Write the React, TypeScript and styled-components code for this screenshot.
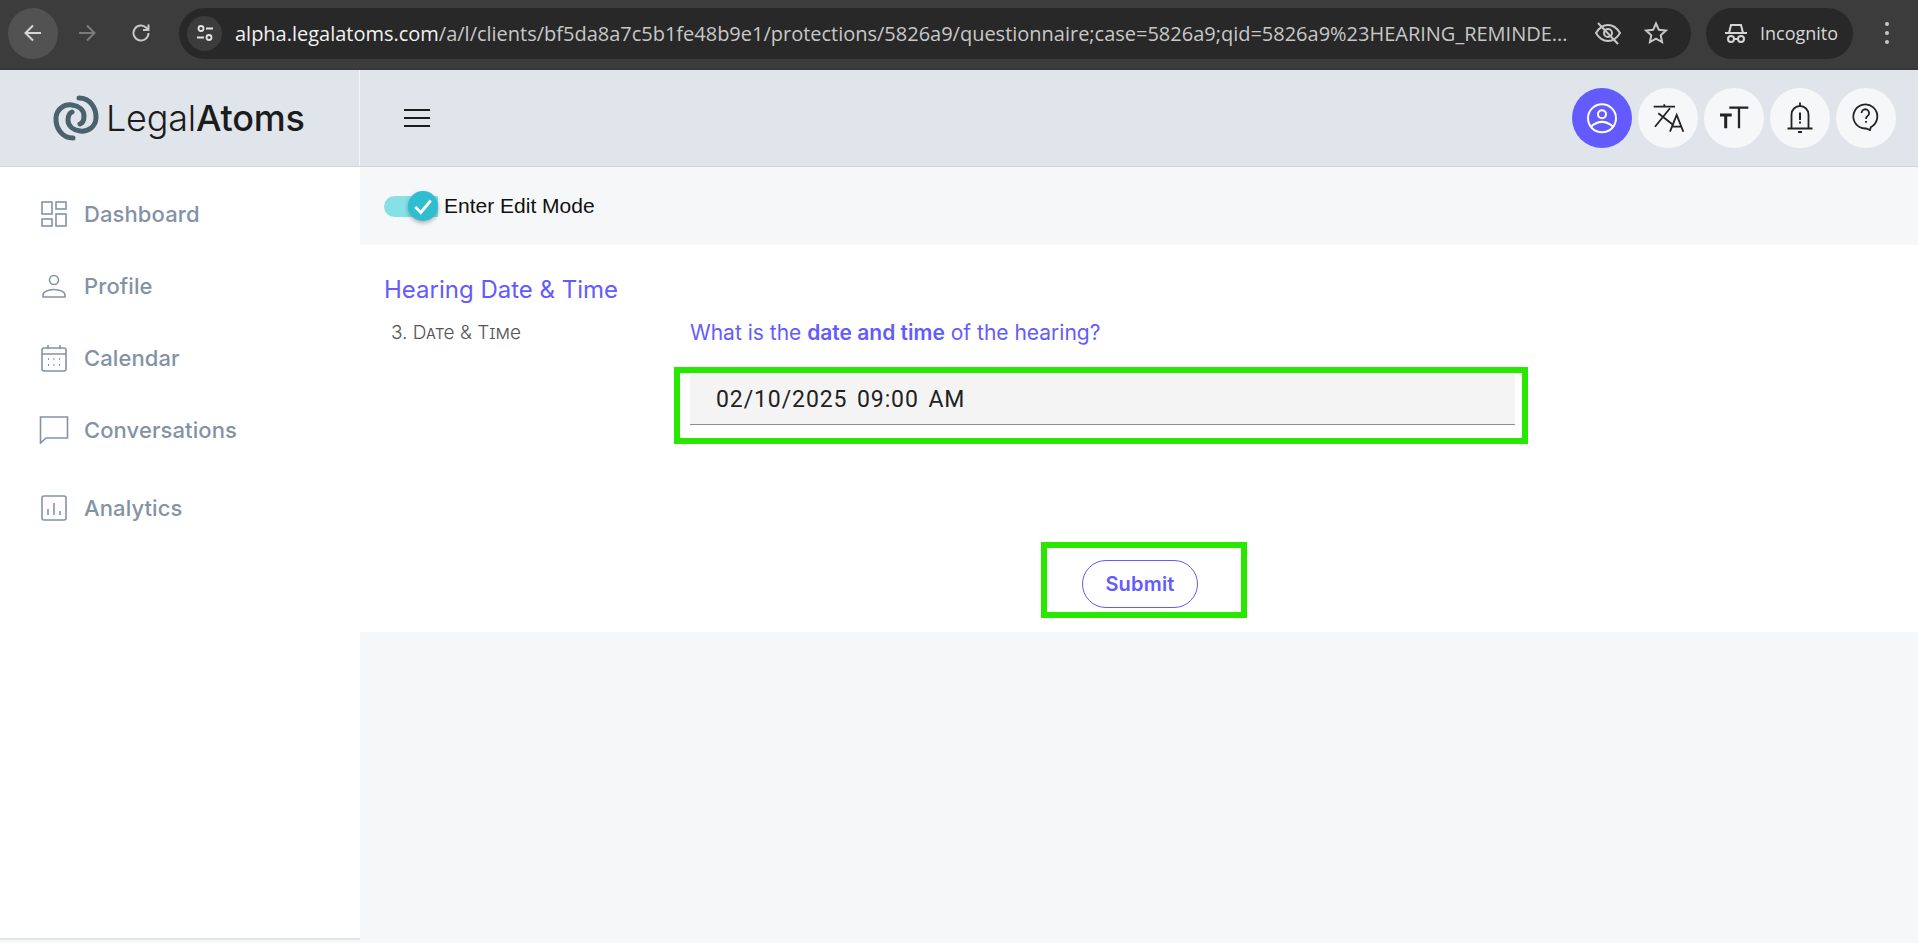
import React from "react";
import styled, { createGlobalStyle } from "styled-components";

const GlobalStyle = createGlobalStyle`
  html, body {
    margin: 0;
    padding: 0;
    height: 943px;
    overflow: hidden;
    background: #f6f7f9;
    font-family: "Inter", "Liberation Sans", sans-serif;
  }
  * { box-sizing: border-box; }
`;

const Page = styled.div`
  display: flex;
  flex-direction: column;
  width: 1918px;
  height: 943px;
`;

/* browser chrome */
const BrowserBar = styled.div`
  display: flex;
  align-items: center;
  height: 70px;
  padding: 0 0 2px 8px;
  background: #3c3c3c;
  border-bottom: 2px solid #383838;
  flex-shrink: 0;
`;

const NavButton = styled.div<{ $active?: boolean }>`
  width: 50px;
  height: 51px;
  margin-right: 4px;
  border-radius: 50%;
  display: flex;
  align-items: center;
  justify-content: center;
  background: ${(p) => (p.$active ? "#525252" : "transparent")};
`;

const Omnibox = styled.div`
  display: flex;
  align-items: center;
  width: 1512px;
  height: 51px;
  margin-left: 9px;
  padding: 0 8px;
  border-radius: 26px;
  background: #282828;
`;

const SiteChip = styled.div`
  width: 35px;
  height: 35px;
  border-radius: 50%;
  background: #3c3c3c;
  display: flex;
  align-items: center;
  justify-content: center;
  flex-shrink: 0;
`;

const Url = styled.div`
  width: 1340px;
  margin-left: 13px;
  font-family: "Open Sans", sans-serif;
  font-size: 20px;
  letter-spacing: -0.01px;
  color: #c7c7c7;
  white-space: nowrap;
  overflow: hidden;

  b {
    font-weight: 400;
    color: #f1f1f1;
  }
`;

const OmniIcons = styled.div`
  display: flex;
  align-items: center;
  gap: 22px;
  margin-left: 19px;
`;

const IncognitoPill = styled.div`
  display: flex;
  align-items: center;
  gap: 12px;
  width: 147px;
  height: 51px;
  margin-left: 15px;
  padding-left: 18px;
  border-radius: 26px;
  background: #282828;
  font-family: "Open Sans", sans-serif;
  font-size: 18px;
  color: #d6d6d6;
  white-space: nowrap;
`;

const MenuDots = styled.div`
  display: flex;
  flex-direction: column;
  gap: 5px;
  margin-left: 32px;

  span {
    width: 4px;
    height: 4px;
    border-radius: 50%;
    background: #c7c7c7;
  }
`;

/* app header */
const Header = styled.header`
  display: flex;
  height: 97px;
  flex-shrink: 0;
  background: #e0e5ec;
  border-bottom: 1px solid #d2d4d6;
`;

const LogoCell = styled.div`
  display: flex;
  align-items: center;
  width: 360px;
  padding-left: 52px;
  border-right: 1px solid #f3f5f8;
`;

const LogoText = styled.div`
  margin-left: 6px;
  font-size: 36px;
  font-weight: 300;
  color: #1c1c1c;
  letter-spacing: -0.2px;

  strong {
    font-weight: 500;
  }
`;

const HeaderRest = styled.div`
  flex: 1;
  display: flex;
  align-items: center;
  justify-content: space-between;
  padding: 0 22px 0 44px;
`;

const Burger = styled.div`
  display: flex;
  flex-direction: column;
  gap: 6px;
  width: 26px;

  span {
    height: 2px;
    background: #1c1c1c;
  }
`;

const HeaderActions = styled.div`
  display: flex;
  gap: 6px;
`;

const RoundButton = styled.div<{ $primary?: boolean }>`
  width: 60px;
  height: 60px;
  border-radius: 50%;
  display: flex;
  align-items: center;
  justify-content: center;
  background: ${(p) => (p.$primary ? "#635bff" : "#f6f7f9")};
`;

/* body */
const Body = styled.div`
  flex: 1;
  display: flex;
  min-height: 0;
`;

const Sidebar = styled.nav`
  width: 360px;
  height: 773px;
  padding-top: 11px;
  flex-shrink: 0;
  background: #fff;
  border-bottom: 2px solid #e4e5e7;
`;

const NavItem = styled.div<{ $gapAbove?: number }>`
  display: flex;
  align-items: center;
  height: 72px;
  margin-top: ${(p) => p.$gapAbove ?? 0}px;
  padding-left: 40px;
  font-size: 22px;
  font-weight: 500;
  letter-spacing: 0.1px;
  color: #8492a6;
`;

const NavIcon = styled.span`
  display: flex;
  width: 44px;
  flex-shrink: 0;
`;

const Main = styled.main`
  flex: 1;
  min-width: 0;
`;

const EditBar = styled.div`
  display: flex;
  align-items: center;
  height: 78px;
  padding-left: 24px;
  font-family: "Liberation Sans", sans-serif;
  font-size: 21px;
  color: #111;
`;

const Toggle = styled.div`
  position: relative;
  width: 54px;
  height: 21px;
  margin-right: 6px;
  border-radius: 11px 0 0 11px;
  background: #86e0e6;
`;

const ToggleThumb = styled.div`
  position: absolute;
  right: 0;
  top: -5px;
  width: 30px;
  height: 30px;
  border-radius: 50%;
  background: #2fbdd0;
  box-shadow: 0 2px 4px rgba(0, 0, 0, 0.3);
  display: flex;
  align-items: center;
  justify-content: center;
`;

const Panel = styled.section`
  height: 387px;
  padding: 32px 0 0 24px;
  background: #fff;
`;

const SectionTitle = styled.h2`
  margin: 0;
  font-size: 24px;
  line-height: 26px;
  font-weight: 400;
  color: #635bff;
`;

const QuestionRow = styled.div`
  display: grid;
  grid-template-columns: 306px 1fr;
  margin-top: 16px;
  height: 26px;
  align-items: center;
`;

const QuestionLabel = styled.div`
  padding-left: 7px;
  font-size: 19px;
  font-weight: 300;
  font-variant: small-caps;
  color: #555;
`;

const QuestionText = styled.div`
  font-size: 21px;
  color: #635bff;

  strong {
    font-weight: 600;
  }
`;

const FieldFrame = styled.div`
  width: 854px;
  height: 77px;
  margin: 22px 0 0 290px;
  padding: 1px 7px 13px 10px;
  border: 6px solid #28e800;
`;

const DateField = styled.div`
  display: flex;
  align-items: center;
  height: 51px;
  padding-left: 26px;
  background: #f4f4f4;
  border-bottom: 1px solid #8c8c8c;
  font-family: "Roboto", sans-serif;
  font-size: 23px;
  letter-spacing: 0.9px;
  word-spacing: 3px;
  color: #222;
`;

const SubmitFrame = styled.div`
  width: 206px;
  height: 76px;
  margin: 98px 0 0 657px;
  padding: 12px 0 0 35px;
  border: 6px solid #28e800;
`;

const SubmitButton = styled.button`
  width: 116px;
  height: 48px;
  padding: 0;
  border: 1px solid #635bff;
  border-radius: 24px;
  background: #fff;
  font-family: "Inter", sans-serif;
  font-size: 20px;
  font-weight: 600;
  letter-spacing: 0.2px;
  color: #635bff;
`;

const grey = { fill: "none", stroke: "#8492a6", strokeWidth: 1.6 };

const navItems: { label: string; icon: React.ReactNode; gap?: number }[] = [
  {
    label: "Dashboard",
    icon: (
      <svg width="28" height="28" viewBox="0 0 28 28" {...grey}>
        <rect x="2" y="2" width="10" height="12" />
        <rect x="16" y="2" width="10" height="7" />
        <rect x="2" y="19" width="10" height="7" />
        <rect x="16" y="14" width="10" height="12" />
      </svg>
    ),
  },
  {
    label: "Profile",
    icon: (
      <svg width="28" height="28" viewBox="0 0 28 28" {...grey}>
        <circle cx="14" cy="8" r="4.5" />
        <path d="M3 25v-2c0-3 5-5.5 11-5.5s11 2.500 11 5.500v2z" />
      </svg>
    ),
  },
  {
    label: "Calendar",
    icon: (
      <svg width="28" height="28" viewBox="0 0 28 28" {...grey}>
        <rect x="2" y="4" width="24" height="23" rx="2" />
        <path d="M2 10h24M8 1v4M20 1v4" />
        <path d="M8 15h1M13.500 15h1M19 15h1M8 21h1M13.500 21h1M19 21h1" strokeWidth="2" />
      </svg>
    ),
  },
  {
    label: "Conversations",
    icon: (
      <svg width="30" height="28" viewBox="0 0 30 28" style={{ marginLeft: -1 }} {...grey}>
        <path d="M1.500 27V1h27v21H7z" />
      </svg>
    ),
  },
  {
    label: "Analytics",
    gap: 6,
    icon: (
      <svg width="28" height="28" viewBox="0 0 28 28" {...grey}>
        <rect x="2" y="2" width="24" height="24" rx="2" />
        <path d="M8 21v-6M14 21V9M20 21v-4" />
      </svg>
    ),
  },
];

export default function App() {
  return (
    <Page>
      <GlobalStyle />
      <BrowserBar>
        <NavButton $active>
          <svg width="24" height="24" viewBox="0 0 24 24" fill="none" stroke="#d6d6d6" strokeWidth="2">
            <path d="M20 12H5M12 4.500 4.500 12l7.500 7.500" />
          </svg>
        </NavButton>
        <NavButton>
          <svg width="24" height="24" viewBox="0 0 24 24" fill="none" stroke="#7b7b7b" strokeWidth="2">
            <path d="M4 12h15M12 4.500l7.500 7.500-7.500 7.500" />
          </svg>
        </NavButton>
        <NavButton>
          <svg width="24" height="24" viewBox="0 0 24 24" fill="none" stroke="#c7c7c7" strokeWidth="2">
            <path d="M19.500 12a7.500 7.500 0 1 1-2.200-5.300L19.500 9M19.500 3.500V9H14" />
          </svg>
        </NavButton>
        <Omnibox>
          <SiteChip>
            <svg width="20" height="20" viewBox="0 0 20 20" fill="none" stroke="#e3e3e3" strokeWidth="1.800">
              <circle cx="6" cy="5.500" r="2.500" />
              <circle cx="14" cy="14.500" r="2.500" />
              <path d="M11 5.500h7M2 14.500h7" />
            </svg>
          </SiteChip>
          <Url>
            <b>alpha.legalatoms.com</b>
            /a/l/clients/bf5da8a7c5b1fe48b9e1/protections/5826a9/questionnaire;case=5826a9;qid=5826a9%23HEARING_REMINDE...
          </Url>
          <OmniIcons>
            <svg width="28" height="28" viewBox="0 0 28 28" fill="none" stroke="#c7c7c7" strokeWidth="2">
              <path d="M2 14c3-5 7-8 12-8s9 3 12 8c-3 5-7 8-12 8s-9-3-12-8z" />
              <circle cx="14" cy="14" r="4" />
              <path d="M4 4l20 21" />
            </svg>
            <svg width="24" height="24" viewBox="0 0 24 24" fill="none" stroke="#c7c7c7" strokeWidth="2">
              <path d="M12 2.500l2.900 6.300 6.900.8-5.100 4.700 1.400 6.800-6.100-3.400-6.100 3.400 1.400-6.800-5.100-4.700 6.900-.8z" />
            </svg>
          </OmniIcons>
        </Omnibox>
        <IncognitoPill>
          <svg width="24" height="24" viewBox="0 0 24 24" fill="none" stroke="#d6d6d6" strokeWidth="2">
            <path d="M1 12h22M5 12l2-8h10l2 8" />
            <circle cx="7" cy="18" r="3" />
            <circle cx="17" cy="18" r="3" />
            <path d="M10 18h4" />
          </svg>
          Incognito
        </IncognitoPill>
        <MenuDots>
          <span />
          <span />
          <span />
        </MenuDots>
      </BrowserBar>

      <Header>
        <LogoCell>
          <svg width="48" height="48" viewBox="-24 -24 48 48" fill="none" stroke="#4a626e" strokeWidth="5" strokeLinecap="round">
            <path d="M3 -20C14 -20 20.500 -10 20 0C19.500 9 12 14 4 13C-3 12 -8 8 -8 2C-8 -2 -6.500 -5 -4 -6" />
            <path d="M-3 20C-14 20 -20.500 10 -20 0C-19.500 -9 -12 -14 -4 -13C3 -12 8 -8 8 -2C8 2 6.500 5 4 6" />
          </svg>
          <LogoText>
            Legal<strong>Atoms</strong>
          </LogoText>
        </LogoCell>
        <HeaderRest>
          <Burger>
            <span />
            <span />
            <span />
          </Burger>
          <HeaderActions>
            <RoundButton $primary>
              <svg width="32" height="32" viewBox="0 0 32 32" fill="none" stroke="#fff" strokeWidth="2">
                <circle cx="16" cy="16.300" r="14" />
                <circle cx="16" cy="12.300" r="4" />
                <path d="M4.700 24.700Q16 15 27.300 24.700" />
              </svg>
            </RoundButton>
            <RoundButton>
              <svg width="32" height="32" viewBox="0 0 32 32" fill="none" stroke="#222" strokeWidth="1.800">
                <path d="M1.700 4.700H23M12.300 2.300v2.400M18 6.300 3 24.700M6.300 11.300 21.300 23" />
                <path d="M18 29.700 24.700 13l6.600 16.700M20 24.700h9.500" />
              </svg>
            </RoundButton>
            <RoundButton>
              <svg width="32" height="32" viewBox="0 0 32 32" fill="none" stroke="#222">
                <path d="M2 13h11.700M7.700 13v13.300" strokeWidth="3" />
                <path d="M11.300 5.700h19M21 5.700v20.600" strokeWidth="2.300" />
              </svg>
            </RoundButton>
            <RoundButton>
              <svg width="32" height="32" viewBox="0 0 32 32" fill="none" stroke="#222" strokeWidth="1.800">
                <path d="M7.500 26.500V12.500a8.500 8.500 0 0 1 17 0v14M3.500 26.500h25M16 0.500V4" />
                <path d="M16 10.500V18M16 19.500v2M14 30h4" strokeWidth="2" />
              </svg>
            </RoundButton>
            <RoundButton>
              <svg width="32" height="32" viewBox="0 0 32 32" fill="none" stroke="#222" strokeWidth="1.800">
                <path d="M20 28l.8-2.800A12 12 0 1 0 16 26.500z" />
                <path d="M11.500 11a3.800 3.800 0 1 1 5.800 3.300c-1 .7-1.300 1.200-1.300 2.700M16 19v1.800" />
              </svg>
            </RoundButton>
          </HeaderActions>
        </HeaderRest>
      </Header>

      <Body>
        <Sidebar>
          {navItems.map((item) => (
            <NavItem key={item.label} $gapAbove={item.gap}>
              <NavIcon>{item.icon}</NavIcon>
              {item.label}
            </NavItem>
          ))}
        </Sidebar>
        <Main>
          <EditBar>
            <Toggle>
              <ToggleThumb>
                <svg width="22" height="22" viewBox="0 0 20 20" fill="none" stroke="#fff" strokeWidth="2.600">
                  <path d="M3 11l5 5 9-11" />
                </svg>
              </ToggleThumb>
            </Toggle>
            Enter Edit Mode
          </EditBar>
          <Panel>
            <SectionTitle>Hearing Date &amp; Time</SectionTitle>
            <QuestionRow>
              <QuestionLabel>3. Date &amp; Time</QuestionLabel>
              <QuestionText>
                What is the <strong>date and time</strong> of the hearing?
              </QuestionText>
            </QuestionRow>
            <FieldFrame>
              <DateField>02/10/2025 09:00 AM</DateField>
            </FieldFrame>
            <SubmitFrame>
              <SubmitButton>Submit</SubmitButton>
            </SubmitFrame>
          </Panel>
        </Main>
      </Body>
    </Page>
  );
}
